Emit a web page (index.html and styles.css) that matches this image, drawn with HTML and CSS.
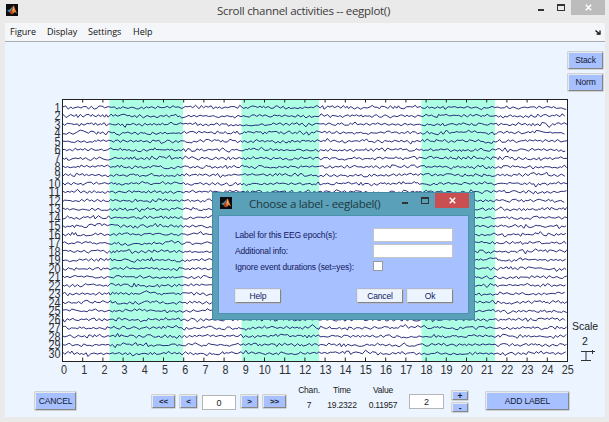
FILE: index.html
```html
<!DOCTYPE html>
<html lang="en">
<head>
<meta charset="utf-8">
<title>Scroll channel activities -- eegplot()</title>
<link rel="stylesheet" href="styles.css">
</head>
<body>
<svg class="defs" aria-hidden="true">
  <symbol id="logo" viewBox="0 0 12 12">
    <rect width="12" height="12" fill="#080b10"/>
    <path d="M1 6.7 4 5.2 6.8 1.9 5.4 7.1 3.4 8.3Z" fill="#448eaa"/>
    <path d="M3.4 8.3 5.2 6.2 7.2 1.4 8.2 2.3 6.5 8.7 5.2 10.4Z" fill="#b83d17"/>
    <path d="M7.2 1.4Q8.2 1.5 8.9 4.5L11 9.5 8.8 8 6.2 10.5Z" fill="#ed8135"/>
    <path d="M7.3 2.3 7.8 5.6 6.3 8Z" fill="#f6c37c"/>
  </symbol>
</svg>
<div class="window">
  <header class="titlebar">
    <svg class="logo"><use href="#logo"/></svg>
    <h1 class="title">Scroll channel activities -- eegplot()</h1>
    <div class="winbtns">
      <span class="min"></span><span class="max"></span>
      <span class="close"><svg viewBox="0 0 7 7"><path d="M.8.8 6.2 6.2M6.2.8.8 6.2"/></svg></span>
    </div>
  </header>
  <nav class="menubar">
    <span class="m-figure">Figure</span><span class="m-display">Display</span><span class="m-settings">Settings</span><span class="m-help">Help</span>
    <svg class="dock" viewBox="0 0 6 5"><path d="M.5.5 4 3.5M5 .5V4.2H1.5" /></svg>
  </nav>
  <main class="body">
    <div class="modes"><button class="btn">Stack</button><button class="btn">Norm</button></div>
    <div class="chart-row">
      <svg class="chart" id="chart" width="533" height="285"></svg>
      <div class="scale"><span>Scale</span><span>2</span>
        <svg viewBox="0 0 16 12"><path d="M1 1.5H11M6 1.5V10.5M1 10.5H11M10 1.5H15M12.5 0V4"/></svg>
      </div>
    </div>
    <div class="controls">
      <button class="btn cancel">CANCEL</button>
      <div class="pager">
        <button class="btn wide">&lt;&lt;</button><button class="btn">&lt;</button><span class="field">0</span><button class="btn">&gt;</button><button class="btn wide">&gt;&gt;</button>
      </div>
      <dl class="readout">
        <div><dt>Chan.</dt><dd>7</dd></div>
        <div><dt>Time</dt><dd>19.2322</dd></div>
        <div><dt>Value</dt><dd>0.11957</dd></div>
      </dl>
      <span class="field spacing">2</span>
      <div class="stepper"><button class="btn">+</button><button class="btn">-</button></div>
      <button class="btn add">ADD LABEL</button>
    </div>
  </main>
</div>
<section class="dialog">
  <header class="dialog-title">
    <svg class="logo"><use href="#logo"/></svg>
    <h2>Choose a label - eeglabel()</h2>
    <div class="winbtns">
      <span class="min"></span><span class="max"></span>
      <span class="close"><svg viewBox="0 0 7 7"><path d="M.8.8 6.2 6.2M6.2.8.8 6.2"/></svg></span>
    </div>
  </header>
  <div class="dialog-body">
    <div class="row"><span>Label for this EEG epoch(s):</span><span class="input"></span></div>
    <div class="row"><span>Additional info:</span><span class="input"></span></div>
    <div class="row"><span>Ignore event durations (set=yes):</span><span class="check"></span></div>
    <div class="actions"><button class="btn">Help</button><button class="btn">Cancel</button><button class="btn">Ok</button></div>
  </div>
</section>
<script src="chart.js"></script>
</body>
</html>
```
FILE: styles.css
```css
* { box-sizing: border-box; }
body { margin: 0; width: 609px; height: 422px; overflow: hidden; font-family: "Liberation Sans", sans-serif; color: #222; }
.defs { position: absolute; width: 0; height: 0; }
.window { width: 609px; height: 422px; padding: 0 4px 5px 5px; background: #eaeaea; display: flex; flex-direction: column; }
.titlebar { height: 23px; display: flex; align-items: flex-start; }
.logo { width: 12px; height: 12px; flex: none; }
.titlebar .logo { margin: 4px 0 0 1px; }
.title { margin: 3px 0 0 199px; font: 11.5px/16px "Open Sans", sans-serif; letter-spacing: -.3px; white-space: nowrap; color: #3c3c3c; }
.winbtns { display: flex; align-items: flex-start; margin-left: auto; }
.min { width: 6px; height: 2px; background: #333; margin-top: 9px; }
.max { width: 8px; height: 7px; border: 1px solid #333; border-top-width: 2px; margin: 4px 6px 0 13px; }
.close { width: 34px; height: 15px; background: #bcbcbc; display: flex; align-items: center; justify-content: center; }
.close svg { width: 7px; height: 7px; fill: none; stroke: #fff; stroke-width: 1.5; }
.menubar { height: 19px; background: #f4f6f9; border-bottom: 1px solid #a9adb0; display: flex; align-items: center; padding: 0 4px 0 5px; font: 9px/14px "Open Sans", sans-serif; color: #111; }
.menubar span { flex: none; }
.m-figure { width: 37px; }
.m-display { width: 41px; }
.m-settings { width: 45px; }
.dock { width: 6px; height: 5px; margin-left: auto; fill: none; stroke: #111; stroke-width: 1.3; }
.body { height: 375px; background: #ebf4ff; display: flex; flex-direction: column; }
.btn { display: block; flex: none; margin: 0; padding: 0; border: 1px solid; border-color: #e9e9e9 #858585 #858585 #e9e9e9; box-shadow: 0 0 0 .5px #b0b0b0; background: #a7c0ff; color: #151b30; font: 8.5px/1 "Liberation Sans", sans-serif; letter-spacing: -.15px; text-align: center; }
.modes { height: 50px; padding: 10px 2px 0 0; display: flex; flex-direction: column; align-items: flex-end; gap: 5px; }
.modes .btn { width: 35px; height: 17px; }
.chart-row { height: 285px; display: flex; padding-left: 35px; }
.chart { overflow: visible; flex: none; }
.chart text { font: 12px "Liberation Sans", sans-serif; fill: #303030; }
.scale { width: 24px; padding-top: 227px; font-size: 10.5px; line-height: 15px; display: flex; flex-direction: column; align-items: center; white-space: nowrap; }
.scale svg { width: 16px; height: 12px; flex: none; margin: 1px 0 0 5px; fill: none; stroke: #333; }
.controls { height: 40px; padding-left: 30px; display: flex; align-items: flex-start; }
.cancel { width: 41px; height: 18px; margin-top: 15px; }
.pager { margin: 18px 0 0 76px; display: flex; align-items: flex-start; gap: 5px; }
.pager .btn { width: 17px; height: 13px; font-weight: bold; font-size: 8px; }
.pager .wide { width: 23px; }
.field { width: 34px; height: 15px; border: 1px solid #b5b5b5; background: #fff; font-size: 9px; line-height: 14px; text-align: center; }
.readout { margin: 8px 0 0 10px; display: flex; font-size: 8.5px; letter-spacing: -.2px; line-height: 10px; }
.readout div { display: flex; flex-direction: column; gap: 5px; align-items: center; }
.readout div:nth-child(1) { width: 26px; }
.readout div:nth-child(2) { width: 40px; }
.readout div:nth-child(3) { width: 42px; }
.readout dd { margin: 0; }
.spacing { width: 35px; margin: 17px 0 0 5px; }
.stepper { margin: 14px 0 0 8px; display: flex; flex-direction: column; gap: 3px; }
.stepper .btn { width: 16px; height: 9px; line-height: 6px; font-weight: bold; }
.add { width: 83px; height: 18px; margin: 15px 0 0 18px; }
.dialog { position: absolute; left: 212px; top: 192px; width: 263px; height: 128px; padding: 0 5px 5px 5px; background: #5aa0b8; border: 1px solid #438ba3; display: flex; flex-direction: column; }
.dialog-title { height: 22px; display: flex; align-items: flex-start; flex: none; }
.dialog-title .logo { margin: 4px 0 0 2px; }
.dialog-title h2 { margin: 2px 0 0 17px; font: 11.5px/17px "Open Sans", sans-serif; letter-spacing: -.3px; white-space: nowrap; color: #203842; }
.dialog .close { background: #c94f51; }
.dialog-body { flex: 1; background: #a7c0ff; border: 1px solid #4a92ad; padding: 12px 15px 0 16px; font-size: 8.5px; letter-spacing: -.17px; color: #12185c; }
.row { height: 16px; display: flex; justify-content: space-between; align-items: flex-start; line-height: 15px; white-space: nowrap; }
.input { width: 80px; height: 14px; background: #fff; border: 1px solid #c5c5c5; }
.check { width: 10px; height: 10px; border: 1px solid #999; background: #fff; margin: 1px 70px 0 0; }
.actions { display: flex; margin-top: 13px; }
.actions .btn { width: 46px; height: 14px; background: #ebf4ff; color: #12185c; }
.actions .btn:nth-child(2) { margin-left: 76px; margin-right: 4px; }
```
FILE: chart.js
```js
const NS = "http://www.w3.org/2000/svg";
const chart = document.getElementById("chart");
const LEFT = 22.5, TOP = 7.5, WIDTH = 505, HEIGHT = 262;

function add(tag, attrs, text) {
  const el = document.createElementNS(NS, tag);
  for (const key in attrs) el.setAttribute(key, attrs[key]);
  if (text !== undefined) el.textContent = text;
  chart.appendChild(el);
}

let seed = 4219;
function random() {
  seed = (seed * 16807) % 2147483647;
  return seed / 2147483647;
}

add("rect", { x: LEFT, y: TOP, width: WIDTH, height: HEIGHT, fill: "#fff" });
[[69.5, 73.5], [201.5, 77.5], [381.5, 73.5]].forEach(([x, width]) =>
  add("rect", { x, y: TOP, width, height: HEIGHT, fill: "#adffe4" }));

for (let ch = 1; ch <= 30; ch++) {
  const y = 15.3 + (ch - 1) * 8.48;
  let points = "", slow = 0, sign = 1;
  for (let x = LEFT; x <= LEFT + WIDTH; x += 1.4 + random() * 2.4) {
    slow = slow * 0.7 + (random() - 0.5) * 1.1;
    sign = random() < 0.8 ? -sign : sign;
    const burst = random() < 0.08 ? 1.8 : 1;
    points += x.toFixed(1) + "," + (y + slow + sign * (0.1 + random() * 1.35) * burst).toFixed(1) + " ";
  }
  add("polyline", { points, fill: "none", stroke: "#15156e", "stroke-width": 0.9, "stroke-linejoin": "round" });
  const width = ch < 10 ? 6 : 12;
  add("text", { x: 20.5 - width, y: y + 4.3, textLength: width, lengthAdjust: "spacingAndGlyphs" }, ch);
}

add("rect", { x: LEFT, y: TOP, width: WIDTH, height: HEIGHT, fill: "none", stroke: "#222" });
for (let t = 0; t <= 25; t++) {
  const x = LEFT + t * WIDTH / 25;
  add("path", { d: `M${x} ${TOP}v3M${x} ${TOP + HEIGHT}v-4`, stroke: "#222" });
  const width = t < 10 ? 6 : 12;
  add("text", { x: x + (t < 10 ? 1.5 : 0.3) - width / 2, y: 281.5, textLength: width, lengthAdjust: "spacingAndGlyphs" }, t);
}
```
